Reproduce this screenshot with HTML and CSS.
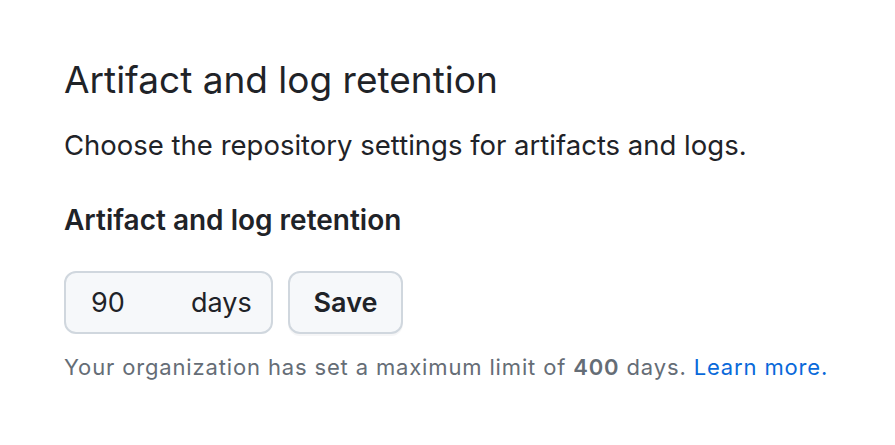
FILE: index.html
```html
<html>
<head>
<link rel="stylesheet" href="styles.css">
</head>
<body>
<div class="settings">
	<h2 class="title">Artifact and log retention</h2>
	<p class="lead">Choose the repository settings for artifacts and logs.</p>
	<form class="retention">
		<label class="label">Artifact and log retention</label>
		<div class="row">
			<div class="days-input">
				<input type="text" value="90">
				<span class="suffix">days</span>
			</div>
			<button type="button" class="btn">Save</button>
		</div>
		<p class="note">Your organization has set a maximum limit of <b>400</b> days. <a href="#">Learn more.</a></p>
	</form>
</div>
</body>
</html>
```
FILE: styles.css
```css
html,body {
	margin: 0;
	padding: 0;
	background: #fff;
	color: #1f2328;
	font-family: Inter, "Noto Sans", sans-serif;
}
.settings {
	padding: 58px 64px 0 64px;
}
.title {
	margin: 0;
	font-size: 37px;
	font-weight: 400;
	line-height: 44px;
}
.lead {
	margin: 26px 0 0 0;
	font-size: 27.5px;
	line-height: 34px;
}
.label {
	display: block;
	margin-top: 41px;
	font-size: 28px;
	font-weight: 600;
	line-height: 34px;
}
.row {
	display: flex;
	gap: 15px;
	margin-top: 34px;
}
.days-input {
	box-sizing: border-box;
	display: flex;
	align-items: center;
	width: 209px;
	height: 63px;
	padding: 0 20px 0 25px;
	background: #f6f8fa;
	border: 2px solid #d0d7de;
	border-radius: 12px;
}
.days-input input {
	width: 100px;
	border: 0;
	background: transparent;
	font-family: inherit;
	font-size: 27px;
	color: #1f2328;
	padding: 0;
	outline: none;
}
.suffix {
	margin-left: auto;
	font-size: 27px;
}
.btn {
	box-sizing: border-box;
	width: 115px;
	height: 63px;
	background: #f6f8fa;
	border: 2px solid #d0d7de;
	border-radius: 12px;
	font-family: inherit;
	font-size: 27px;
	font-weight: 600;
	color: #1f2328;
	box-shadow: 0 2px 0 rgba(31,35,40,0.04);
}
.note {
	margin: 17px 0 0 0;
	font-size: 22px;
	letter-spacing: 0.85px;
	line-height: 32px;
	color: #656d76;
}
.note b {
	font-weight: 600;
}
.note a {
	color: #0969da;
	text-decoration: none;
}
```
